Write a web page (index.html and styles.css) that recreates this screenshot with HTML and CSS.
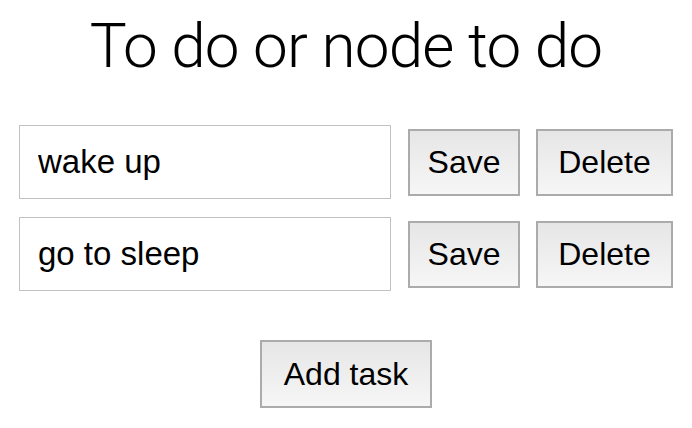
FILE: index.html
```html
<!DOCTYPE html>
<html>
<head>
<meta charset="utf-8">
<link rel="stylesheet" href="styles.css">
</head>
<body>
<div class="app">
  <h1 class="title">To do or node to do</h1>
  <div class="list">
    <div class="row">
      <input class="task" type="text" value="wake up">
      <button class="btn btn-save">Save</button>
      <button class="btn btn-delete">Delete</button>
    </div>
    <div class="row">
      <input class="task" type="text" value="go to sleep">
      <button class="btn btn-save">Save</button>
      <button class="btn btn-delete">Delete</button>
    </div>
  </div>
  <div class="actions">
    <button class="btn btn-add">Add task</button>
  </div>
</div>
</body>
</html>
```
FILE: styles.css
```css
html, body {
  margin: 0;
  padding: 0;
  background: #fff;
}
.app {
  padding: 0 19px;
  font-family: "Liberation Sans", Arial, sans-serif;
  color: #000;
}
.title {
  margin: 10px 0 0;
  font-family: Roboto, sans-serif;
  font-weight: 300;
  font-size: 62px;
  line-height: 72px;
  letter-spacing: -0.8px;
  text-align: center;
}
.list {
  margin-top: 43px;
  display: flex;
  flex-direction: column;
  gap: 18px;
}
.row {
  display: flex;
  align-items: center;
}
.task {
  box-sizing: border-box;
  width: 372px;
  height: 74px;
  margin: 0;
  padding: 0 0 0 18px;
  border: 1px solid #c2c2c2;
  border-radius: 0;
  outline: none;
  font-family: "Liberation Sans", Arial, sans-serif;
  font-size: 33px;
  color: #000;
  background: #fff;
}
.btn {
  box-sizing: border-box;
  height: 67px;
  margin: 0;
  padding: 0;
  border: 2px solid #ababab;
  border-radius: 0;
  background: linear-gradient(#e6e6e6, #f6f6f6);
  font-family: "Liberation Sans", Arial, sans-serif;
  font-size: 32px;
  color: #000;
  text-align: center;
}
.btn-save {
  width: 112px;
  margin-left: 17px;
}
.btn-delete {
  width: 137px;
  margin-left: 16px;
}
.actions {
  margin-top: 49px;
  display: flex;
  justify-content: center;
}
.btn-add {
  width: 172px;
  height: 68px;
}
```
